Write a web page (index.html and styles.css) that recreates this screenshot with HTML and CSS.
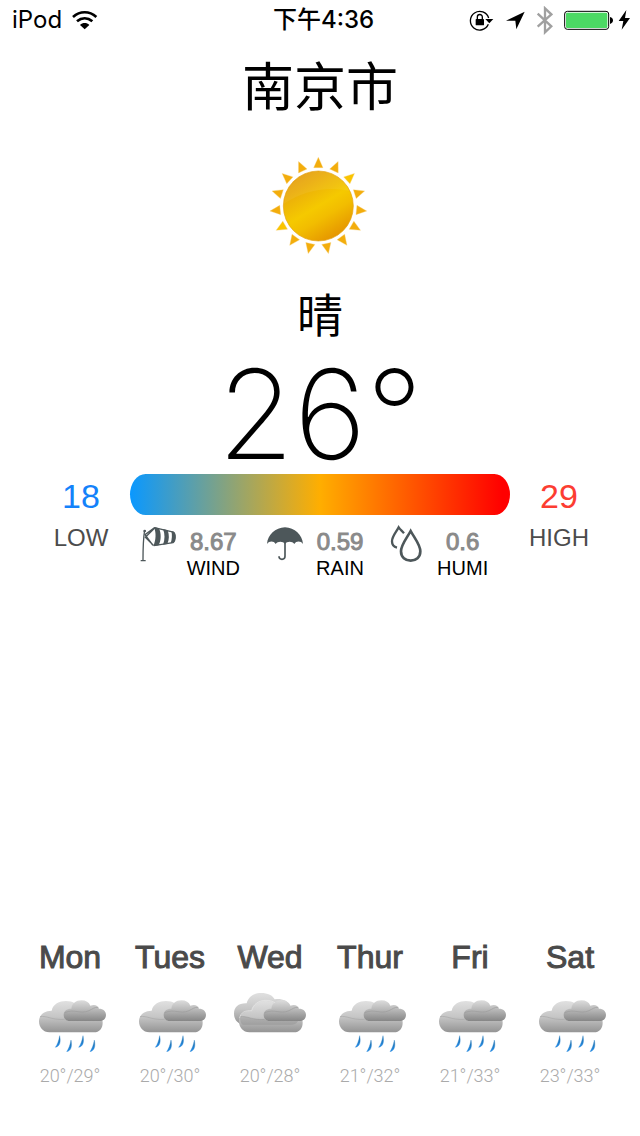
FILE: index.html
```html
<!DOCTYPE html>
<html lang="zh-CN">
<head>
<meta charset="utf-8">
<meta name="viewport" content="width=device-width, initial-scale=1">
<title>南京市</title>
<link rel="stylesheet" href="styles.css">
</head>
<body>
<svg class="defs" aria-hidden="true">
  <defs>
    <linearGradient id="cloud-back" x1="0" y1="0" x2="0" y2="1">
      <stop offset="0" stop-color="#e0e0e0"/><stop offset=".5" stop-color="#c6c6c6"/><stop offset="1" stop-color="#949494"/>
    </linearGradient>
    <linearGradient id="cloud-front" x1="0" y1="0" x2="0" y2="1">
      <stop offset="0" stop-color="#dcdcdc"/><stop offset=".5" stop-color="#b4b4b4"/><stop offset="1" stop-color="#868686"/>
    </linearGradient>
    <linearGradient id="drop" x1="0" y1="0" x2="0" y2="1">
      <stop offset="0" stop-color="#1d6595"/><stop offset="1" stop-color="#2590f0"/>
    </linearGradient>
    <linearGradient id="sun-face" x1=".2" y1="0" x2=".8" y2="1">
      <stop offset="0" stop-color="#e39a12"/><stop offset=".5" stop-color="#f5c900"/><stop offset=".65" stop-color="#f2bd00"/><stop offset="1" stop-color="#e28c00"/>
    </linearGradient>
    <path id="ray" d="M190 37L204 68H176Z"/>
    <path id="raindrop" d="M119 317C123 336 120 349 106 352C112 343 116 334 119 317Z" stroke="#2a86d0" stroke-width="1"/>
    <g id="clouds">
      <path d="M88 307C69 307 57 292 57 274C57 256 72 242 95 242C99 222 118 213 138 213C160 213 172 222 180 238L238 255C244 260 248 268 248 278C248 295 238 307 222 307Z" fill="url(#cloud-back)"/>
      <path d="M60 260C82 256 94 271 134 268" fill="none" stroke="#a8a8a8" stroke-width="2"/>
      <path d="M149 273C138 273 131 265 131 255C131 244 139 236 154 236C156 220 168 211 184 211C198 211 207 217 211 227C222 222 234 225 237 236C250 236 258 244 258 255C258 266 250 273 238 273Z" fill="url(#cloud-front)"/>
      <path d="M134 248C164 235 180 254 207 242C218 237 223 231 235 232" fill="none" stroke="#9c9c9c" stroke-width="2"/>
    </g>
    <symbol id="rain" viewBox="42 186 216 180">
      <use href="#clouds"/>
      <g fill="url(#drop)">
        <use href="#raindrop"/>
        <use href="#raindrop" x="34" y="13"/>
        <use href="#raindrop" x="70"/>
        <use href="#raindrop" x="104" y="13"/>
      </g>
    </symbol>
    <symbol id="overcast" viewBox="42 186 216 180">
      <path d="M68 284C52 280 42 268 42 251C42 231 56 219 80 220C85 199 103 189 123 189C144 189 158 196 164 208C184 205 202 211 211 227L235 250V272C230 280 222 284 212 284Z" fill="url(#cloud-back)"/>
      <use href="#clouds"/>
      <path d="M59 264C62 247 76 241 95 242C99 222 118 211 138 211C150 211 158 214 165 218" fill="none" stroke="#ececec" stroke-width="2"/>
      <path d="M60 260C82 256 94 271 132 267C140 273 150 273 160 273H234C231 280 224 284 212 284H68C62 278 60 270 60 260Z" fill="#777" opacity=".25"/>
    </symbol>
  </defs>
</svg>

<header class="status">
  <div class="status-left">
    <span>iPod</span>
    <svg class="wifi" viewBox="216 30 78 60" role="img" aria-label="Wi-Fi">
      <g fill="none" stroke="#000" stroke-width="8">
        <path d="M219 51C240 32 268 32 289 51"/>
        <path d="M231 64C245 52 263 52 277 64"/>
      </g>
      <path d="M240 75C248 67 260 67 268 75L254 88Z"/>
    </svg>
  </div>
  <time class="clock">下午4:36</time>
  <div class="status-right">
    <svg class="lock" viewBox="45 27 75 66" role="img" aria-label="Rotation lock">
      <path d="M103 73A28 28 0 1 1 104 54" fill="none" stroke="#000" stroke-width="4"/>
      <path d="M94 57H118L106 70Z"/>
      <rect x="65" y="57" width="25" height="19" rx="2"/>
      <path d="M70 58V51A7.500 7.500 0 0 1 85 51V58" fill="none" stroke="#000" stroke-width="4"/>
    </svg>
    <svg class="arrow" viewBox="150 33 60 57" role="img" aria-label="Location">
      <path d="M209 35L184 88L181 62L153 62Z"/>
    </svg>
    <svg class="bluetooth" viewBox="240 18 51 87" role="img" aria-label="Bluetooth">
      <path d="M245 41L286 79L267 97V25L286 43L245 80" fill="none" stroke="#a0a0a0" stroke-width="7"/>
    </svg>
    <svg class="battery" viewBox="327 30 150 63" role="img" aria-label="Battery full">
      <rect x="329" y="34" width="132" height="54" rx="8" fill="#fff" stroke="#000" stroke-width="3"/>
      <rect x="333" y="38" width="124" height="46" rx="4" fill="#4cd964"/>
      <path d="M465 51C471 52 474 56 474 61S471 70 465 72Z"/>
    </svg>
    <svg class="bolt" viewBox="489 27 39 66" role="img" aria-label="Charging">
      <path d="M514 30L491 63H505L500 89L525 54H510Z"/>
    </svg>
  </div>
</header>

<main class="weather">
  <h1 class="city">南京市</h1>
  <svg class="sun" viewBox="39 24 312 312" role="img" aria-label="晴">
    <g fill="#f3ad0c" stroke="#f8d27a" stroke-width="1">
      <use href="#ray"/>
      <use href="#ray" transform="rotate(24 190 183)"/>
      <use href="#ray" transform="rotate(48 190 183)" fill="#fac400"/>
      <use href="#ray" transform="rotate(72 190 183)"/>
      <use href="#ray" transform="rotate(96 190 183)"/>
      <use href="#ray" transform="rotate(120 190 183)"/>
      <use href="#ray" transform="rotate(144 190 183)"/>
      <use href="#ray" transform="rotate(168 190 183)"/>
      <use href="#ray" transform="rotate(192 190 183)"/>
      <use href="#ray" transform="rotate(216 190 183)"/>
      <use href="#ray" transform="rotate(240 190 183)" fill="#fac400"/>
      <use href="#ray" transform="rotate(264 190 183)"/>
      <use href="#ray" transform="rotate(288 190 183)"/>
      <use href="#ray" transform="rotate(312 190 183)"/>
      <use href="#ray" transform="rotate(336 190 183)"/>
    </g>
    <circle cx="190" cy="183" r="105" fill="url(#sun-face)" stroke="#e6a312" stroke-width="2"/>
    <path d="M87 176A104 104 0 0 1 284 138C220 122 142 138 87 176Z" fill="#fff" opacity=".06"/>
  </svg>
  <p class="condition">晴</p>
  <p class="temperature">26°</p>

  <section class="today">
    <div class="limit low"><strong>18</strong><span>LOW</span></div>
    <div class="middle">
      <div class="range"></div>
      <div class="stats">
        <div class="stat">
          <svg viewBox="300 180 108 111" aria-hidden="true">
            <g fill="none" stroke="#4d575a" stroke-width="4">
              <path d="M314 195C309 225 309 255 309 286M302 287H317"/>
              <path d="M343 188L315 209L338 240M345 188L316 217L340 241M343 188L400 201C408 206 407 228 399 233L341 242"/>
            </g>
            <g fill="#4d575a">
              <path d="M342 186L357 190C364 205 364 226 356 241L340 243C348 225 349 204 342 186Z"/>
              <path d="M369 192L383 196C388 210 388 224 382 237L369 239C375 223 375 207 369 192Z"/>
              <path d="M394 198L402 201C408 207 408 228 400 233L392 235C396 222 397 210 394 198Z"/>
              <circle cx="314" cy="198" r="4"/>
            </g>
          </svg>
          <div class="reading"><b>8.67</b><span>WIND</span></div>
        </div>
        <div class="stat">
          <svg viewBox="681 180 108 111" aria-hidden="true">
            <path d="M681 237C683 209 706 189 735 187C764 189 787 209 789 237C783 227 768 227 763 237C757 228 741 228 735 237C729 228 713 228 707 237C702 227 687 227 681 237Z" fill="#4d575a"/>
            <path d="M735 230V274C735 286 717 286 717 274" fill="none" stroke="#4d575a" stroke-width="5"/>
          </svg>
          <div class="reading"><b>0.59</b><span>RAIN</span></div>
        </div>
        <div class="stat">
          <svg viewBox="213 180 108 111" aria-hidden="true">
            <g fill="none" stroke="#4d575a">
              <path d="M278 198C268 217 249 239 249 259C249 277 262 287 278 287S307 277 307 259C307 239 288 217 278 198Z" stroke-width="8"/>
              <path d="M258 205C253 199 246 193 242 187C235 201 222 214 222 229C222 239 228 246 237 248" stroke-width="7"/>
            </g>
          </svg>
          <div class="reading"><b>0.6</b><span>HUMI</span></div>
        </div>
      </div>
    </div>
    <div class="limit high"><strong>29</strong><span>HIGH</span></div>
  </section>
</main>

<footer class="forecast">
  <div class="day"><h2>Mon</h2><svg role="img" aria-label="Rain"><use href="#rain"/></svg><p>20°/29°</p></div>
  <div class="day"><h2>Tues</h2><svg role="img" aria-label="Rain"><use href="#rain"/></svg><p>20°/30°</p></div>
  <div class="day"><h2>Wed</h2><svg role="img" aria-label="Overcast"><use href="#overcast"/></svg><p>20°/28°</p></div>
  <div class="day"><h2>Thur</h2><svg role="img" aria-label="Rain"><use href="#rain"/></svg><p>21°/32°</p></div>
  <div class="day"><h2>Fri</h2><svg role="img" aria-label="Rain"><use href="#rain"/></svg><p>21°/33°</p></div>
  <div class="day"><h2>Sat</h2><svg role="img" aria-label="Rain"><use href="#rain"/></svg><p>23°/33°</p></div>
</footer>
</body>
</html>
```
FILE: styles.css
```css
* {
  box-sizing: border-box;
}

body {
  margin: 0;
  min-height: 100vh;
  display: flex;
  flex-direction: column;
  background: #fff;
  color: #000;
  font-family: "Liberation Sans", "Noto Sans CJK SC", sans-serif;
}

h1, h2, p {
  margin: 0;
  font-weight: 400;
}

svg {
  display: block;
}

.defs {
  position: absolute;
  width: 0;
  height: 0;
}

.status {
  display: grid;
  grid-template-columns: 1fr auto 1fr;
  align-items: center;
  height: 40px;
  padding: 0 9px 0 12px;
  font: 400 24px/40px Inter, "Noto Sans CJK SC", sans-serif;
}

.status-left,
.status-right {
  display: flex;
  align-items: center;
  gap: 11px;
}

.status-left {
  gap: 10px;
}

.status-right {
  justify-content: flex-end;
}

.clock {
  padding-left: 4px;
  font-weight: 500;
}

.wifi {
  width: 26px;
  height: 20px;
}

.lock {
  width: 25px;
  height: 22px;
}

.arrow {
  width: 20px;
  height: 19px;
}

.bluetooth {
  width: 17px;
  height: 29px;
}

.battery {
  width: 50px;
  height: 21px;
}

.bolt {
  width: 13px;
  height: 22px;
  margin-left: -7px;
}

.weather {
  display: flex;
  flex-direction: column;
  align-items: center;
  padding-top: 18px;
}

.city {
  font-size: 52px;
  line-height: 60px;
}

.sun {
  width: 104px;
  height: 104px;
  margin-top: 35px;
}

.condition {
  margin-top: 29px;
  font-size: 46px;
  line-height: 60px;
}

.temperature {
  margin-top: 12px;
  font: 200 124px/112px Inter, sans-serif;
}

.today {
  display: grid;
  grid-template-columns: 98px 1fr 98px;
  align-self: stretch;
  margin-top: 4px;
  padding: 0 32px;
}

.limit {
  display: flex;
  flex-direction: column;
  align-items: center;
  color: #4c4c4c;
  font-size: 24px;
  line-height: 40px;
}

.limit strong {
  font-size: 34px;
  line-height: 44px;
  font-weight: 400;
}

.low strong {
  color: #1482fa;
}

.high strong {
  color: #fc3d32;
}

.range {
  height: 41px;
  border-radius: 16px / 21px;
  background: linear-gradient(90deg, #0a98ff, #ffae00 50%, #f00 98%);
}

.stats {
  display: grid;
  grid-template-columns: repeat(3, 1fr);
  padding-top: 10px;
}

.stat {
  display: flex;
  align-items: flex-start;
  padding: 0 6px 0 10px;
}

.stat:last-child {
  padding: 0 10px 0 6px;
}

.stat svg {
  flex: none;
  width: 36px;
  height: 37px;
}

.reading {
  flex: 1;
  display: flex;
  flex-direction: column;
  align-items: center;
  padding-top: 3px;
  font-size: 20px;
  line-height: 24px;
}

.reading b {
  color: #8a8a8a;
  font-size: 24px;
  line-height: 28px;
  font-weight: 400;
  -webkit-text-stroke: 1px #8a8a8a;
}

.forecast {
  display: grid;
  grid-template-columns: repeat(6, 1fr);
  margin-top: auto;
  padding: 0 20px 48px;
}

.day {
  display: flex;
  flex-direction: column;
  align-items: center;
  color: #4a4a4a;
}

.day h2 {
  font-size: 32px;
  line-height: 40px;
  -webkit-text-stroke: 1px #4a4a4a;
}

.day svg {
  width: 72px;
  height: 60px;
  margin-top: 15px;
}

.day p {
  margin-top: 12px;
  color: #aaa;
  font: 300 18px/24px Roboto, sans-serif;
}
```
